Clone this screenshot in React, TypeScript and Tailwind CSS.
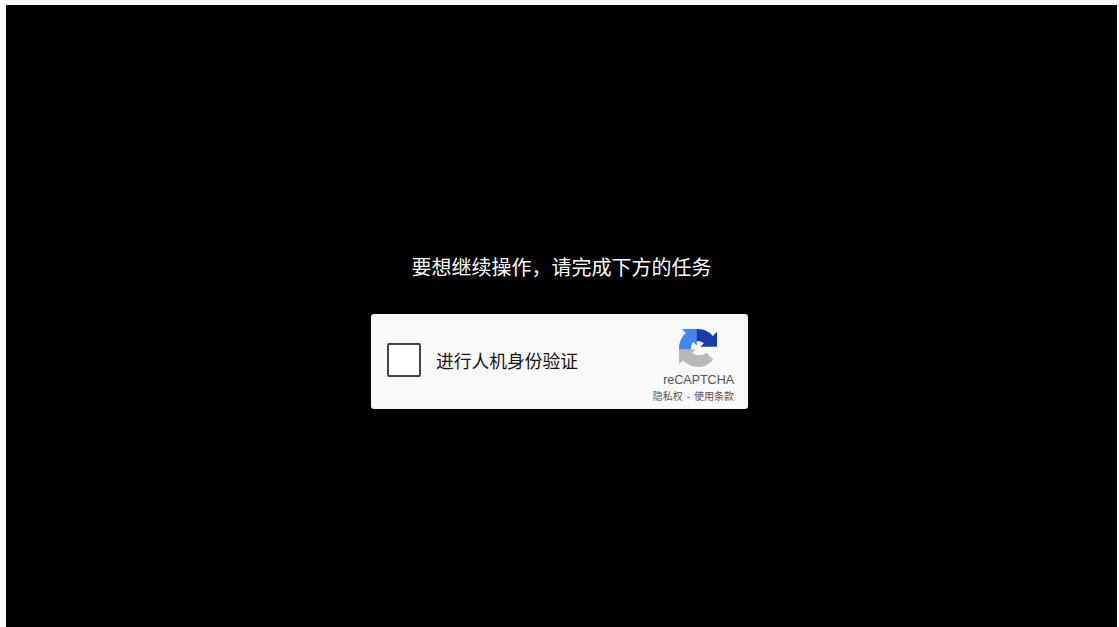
export default function App() {
  return (
    <div className="h-[627px] w-[1119px] overflow-hidden bg-white pt-[5px] pl-[6px] pr-[2px] font-['Liberation_Sans','Noto_Sans_CJK_SC',sans-serif]">
      <div className="flex h-[622px] flex-col items-center bg-black pt-[249px]">
        <h1 className="h-[28px] text-[20px] leading-[28px] font-normal text-white">{"要想继续操作\uFF0C请完成下方的任务"}</h1>
        <div className="mt-[32px] mr-[4px] flex h-[95px] w-[377px] items-center rounded-[3px] bg-[#f9f9f9] pl-[16px]">
          <div className="mb-[4px] h-[34px] w-[34px] rounded-[2px] border-2 border-[#444] bg-white" />
          <span className="ml-[15px] text-[17.75px] leading-[24px] text-[#111]">进行人机身份验证</span>
          <div className="ml-auto mr-[14px] flex h-full w-[90px] flex-col items-end pt-[15px]">
            <svg width="38" height="38" viewBox="0 0 64 64" className="mr-[17px]">
              <path d="M64 30V4.7L56.8 11.8C51 4.7 42 .1 32 .1C21.5 .1 12.2 5 6.3 12.8L18 24.6C21 22 26 20 32 20C36 20 39.5 21.5 42 24L36 30Z" fill="#1c3aa9" />
              <path d="M30 0H4.6L11.8 7.3C4.6 13.1 0 22.1 0 32.2C0 42.7 5 52 12.7 57.8L24.6 46C22 44 20 38 20 32C20 28 21.5 25 24 22L30 28Z" fill="#4285f4" />
              <path d="M0 34V59.3L7.2 52.2C13 59.4 22 64 32 64C42.5 64 51.8 59 57.6 51.3L45.9 39.4C43 43 38 44 32 44C28.5 44 25 42.5 22 40L28 34Z" fill="#b9b9b9" />
            </svg>
            <span className="mt-[6px] text-[12.5px] leading-[14px] whitespace-nowrap text-[#555]">reCAPTCHA</span>
            <span className="mt-[3px] flex gap-[4px] text-[10px] leading-[14px] whitespace-nowrap text-[#555]">
              <span>隐私权</span>
              <span>-</span>
              <span>使用条款</span>
            </span>
          </div>
        </div>
      </div>
    </div>
  );
}
